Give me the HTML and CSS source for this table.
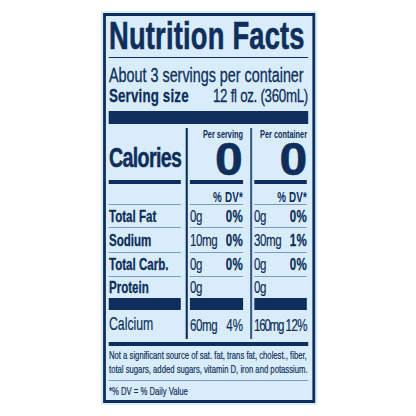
FILE: index.html
```html
<!DOCTYPE html>
<html lang="en">
<head>
<meta charset="utf-8">
<title>Nutrition Facts</title>
<link rel="stylesheet" href="styles.css">
</head>
<body>
<div class="label">
  <div class="box">
    <h1 class="title">Nutrition Facts</h1>
    <div class="servings">About 3 servings per container</div>
    <div class="size"><span class="size-label">Serving size</span><span class="size-value">12 fl oz. (360mL)</span></div>
    <div class="bar"></div>
    <div class="table">
      <div class="row row-cal">
        <div class="cell c1"><div class="in"><span class="calories">Calories</span></div></div>
        <div class="cell c2"><div class="in"><span class="per">Per serving</span><span class="zero">0</span></div></div>
        <div class="cell c3"><div class="in"><span class="per">Per container</span><span class="zero">0</span></div></div>
      </div>
      <div class="row row-dv">
        <div class="cell c1"><div class="in"></div></div>
        <div class="cell c2"><div class="in"><span class="dv">% DV*</span></div></div>
        <div class="cell c3"><div class="in"><span class="dv">% DV*</span></div></div>
      </div>
      <div class="row row-n r1">
        <div class="cell c1"><div class="in"><span class="nut">Total Fat</span></div></div>
        <div class="cell c2"><div class="in"><span class="amt">0g</span><span class="pct">0%</span></div></div>
        <div class="cell c3"><div class="in"><span class="amt">0g</span><span class="pct">0%</span></div></div>
      </div>
      <div class="row row-n r2">
        <div class="cell c1"><div class="in"><span class="nut">Sodium</span></div></div>
        <div class="cell c2"><div class="in"><span class="amt">10mg</span><span class="pct">0%</span></div></div>
        <div class="cell c3"><div class="in"><span class="amt">30mg</span><span class="pct">1%</span></div></div>
      </div>
      <div class="row row-n r3">
        <div class="cell c1"><div class="in"><span class="nut">Total Carb.</span></div></div>
        <div class="cell c2"><div class="in"><span class="amt">0g</span><span class="pct">0%</span></div></div>
        <div class="cell c3"><div class="in"><span class="amt">0g</span><span class="pct">0%</span></div></div>
      </div>
      <div class="row row-n r4">
        <div class="cell c1"><div class="in"><span class="nut">Protein</span></div></div>
        <div class="cell c2"><div class="in"><span class="amt">0g</span></div></div>
        <div class="cell c3"><div class="in"><span class="amt">0g</span></div></div>
      </div>
      <div class="row row-n r5">
        <div class="cell c1"><div class="in"><span class="nut calcium">Calcium</span></div></div>
        <div class="cell c2"><div class="in"><span class="amt">60mg</span><span class="pct plain">4%</span></div></div>
        <div class="cell c3"><div class="in"><span class="amt tight">160mg</span><span class="pct plain tight">12%</span></div></div>
      </div>
    </div>
    <p class="note">Not a significant source of sat. fat, trans fat, cholest., fiber,<br>total sugars, added sugars, vitamin D, iron and potassium.</p>
    <p class="dvnote">*% DV = % Daily Value</p>
  </div>
</div>
</body>
</html>
```

FILE: styles.css
```css
:root {
  --navy: #0f2e5c;
  --rule: #8098b8;
  --bg: #d8edf9;
  --font: "Liberation Sans", Arial, sans-serif;
}

body {
  margin: 0;
  background: #ffffff;
}

/* The label is laid out at a wider width and condensed horizontally,
   to mimic a condensed grotesque typeface. */
.label {
  margin: 11px 0 0 101px;
  width: 308.6px;
  height: 394px;
  box-sizing: border-box;
  padding: 2px 2.86px;
  background: var(--bg);
  font-family: var(--font);
  color: var(--navy);
  transform: scaleX(0.7);
  transform-origin: 0 0;
}

.box {
  height: 100%;
  box-sizing: border-box;
  border-style: solid;
  border-color: var(--navy);
  border-width: 3px 4px;
  padding: 0 6px 0 4.57px;
}

.title {
  margin: 0;
  font-size: 39px;
  line-height: 40px;
  font-weight: 700;
  letter-spacing: 0.3px;
  padding: 0 0 1px 0;
  border-bottom: 1px solid var(--navy);
  white-space: nowrap;
  -webkit-text-stroke: 0.6px var(--navy);
}

.servings {
  margin-top: 6px;
  font-size: 20.5px;
  line-height: 21px;
  white-space: nowrap;
  -webkit-text-stroke: 0.3px var(--navy);
}

.size {
  display: flex;
  justify-content: space-between;
  font-size: 19px;
  line-height: 22px;
  white-space: nowrap;
}

.size-label {
  font-weight: 700;
  letter-spacing: 0.25px;
  -webkit-text-stroke: 0.3px var(--navy);
}

.size-value {
  letter-spacing: -0.4px;
  -webkit-text-stroke: 0.3px var(--navy);
}

.bar {
  margin-top: 4px;
  height: 13px;
  background: var(--navy);
}

.table {
  margin-top: 4px;
}

.row {
  display: grid;
  grid-template-columns: 110px 91.4px 1fr;
}

.cell {
  padding-right: 7.14px;
}

.cell.c2 {
  border-left: 3px solid var(--navy);
  padding: 0 10px 0 2.86px;
}

.cell.c3 {
  border-left: 3px solid #3a5b86;
  padding: 0 1.4px 0 2.86px;
}

.in {
  box-sizing: border-box;
  display: flex;
  justify-content: space-between;
  align-items: flex-end;
  white-space: nowrap;
}

/* calories */
.row-cal .in {
  height: 56px;
  border-bottom: 4px solid var(--navy);
}

.row-cal .c1 .in {
  padding-bottom: 8px;
}

.row-cal .c2 .in,
.row-cal .c3 .in {
  flex-direction: column;
  align-items: flex-end;
  justify-content: flex-start;
}

.calories {
  font-size: 28px;
  line-height: 28px;
  font-weight: 700;
  letter-spacing: -0.9px;
  -webkit-text-stroke: 0.5px var(--navy);
}

.per {
  font-size: 10.5px;
  line-height: 12px;
  font-weight: 700;
}

.zero {
  display: inline-block;
  font-size: 46px;
  line-height: 38px;
  font-weight: 700;
  transform: scaleX(1.55);
  transform-origin: right center;
  -webkit-text-stroke: 0.6px var(--navy);
}

/* % DV */
.row-dv .in {
  height: 21px;
  border-bottom: 1px solid var(--rule);
  justify-content: flex-end;
}

.dv {
  font-size: 14px;
  line-height: 14px;
  font-weight: 700;
  letter-spacing: 0.3px;
}

/* nutrient rows */
.row-n .in {
  border-bottom: 1px solid var(--rule);
}

.r1 .in { height: 23px; padding-bottom: 3px; }
.r2 .in { height: 25px; padding-bottom: 4px; }
.r3 .in { height: 24px; padding-bottom: 4px; }
.r4 .in {
  height: 33px;
  border-bottom: 12px solid var(--navy);
  padding-bottom: 3px;
}
.r5 .in {
  height: 29px;
  border-bottom: 0;
  padding-bottom: 6px;
}

.nut {
  font-size: 16.5px;
  line-height: 16px;
  font-weight: 700;
  -webkit-text-stroke: 0.3px var(--navy);
}

.nut.calcium {
  font-size: 17.5px;
  line-height: 18px;
  font-weight: 400;
  -webkit-text-stroke: 0.2px var(--navy);
}

.amt {
  font-size: 16.5px;
  line-height: 16px;
  letter-spacing: -0.6px;
  -webkit-text-stroke: 0.2px var(--navy);
}

.pct {
  font-size: 16.5px;
  line-height: 16px;
  font-weight: 700;
  letter-spacing: 0.4px;
  -webkit-text-stroke: 0.3px var(--navy);
}

.pct.plain {
  font-weight: 400;
  letter-spacing: 0;
  -webkit-text-stroke: 0.2px var(--navy);
}

.amt.tight {
  letter-spacing: -1.8px;
}

.pct.plain.tight {
  letter-spacing: -0.8px;
}

.note {
  margin: 3px 0 0;
  border-top: 4px solid var(--navy);
  border-bottom: 1px solid var(--rule);
  padding: 2px 0 4px 0;
  font-size: 11px;
  line-height: 14px;
  white-space: nowrap;
  -webkit-text-stroke: 0.2px var(--navy);
}

.dvnote {
  margin: 0;
  padding: 4px 0 0 0;
  font-size: 11px;
  line-height: 12px;
  -webkit-text-stroke: 0.2px var(--navy);
}
```
